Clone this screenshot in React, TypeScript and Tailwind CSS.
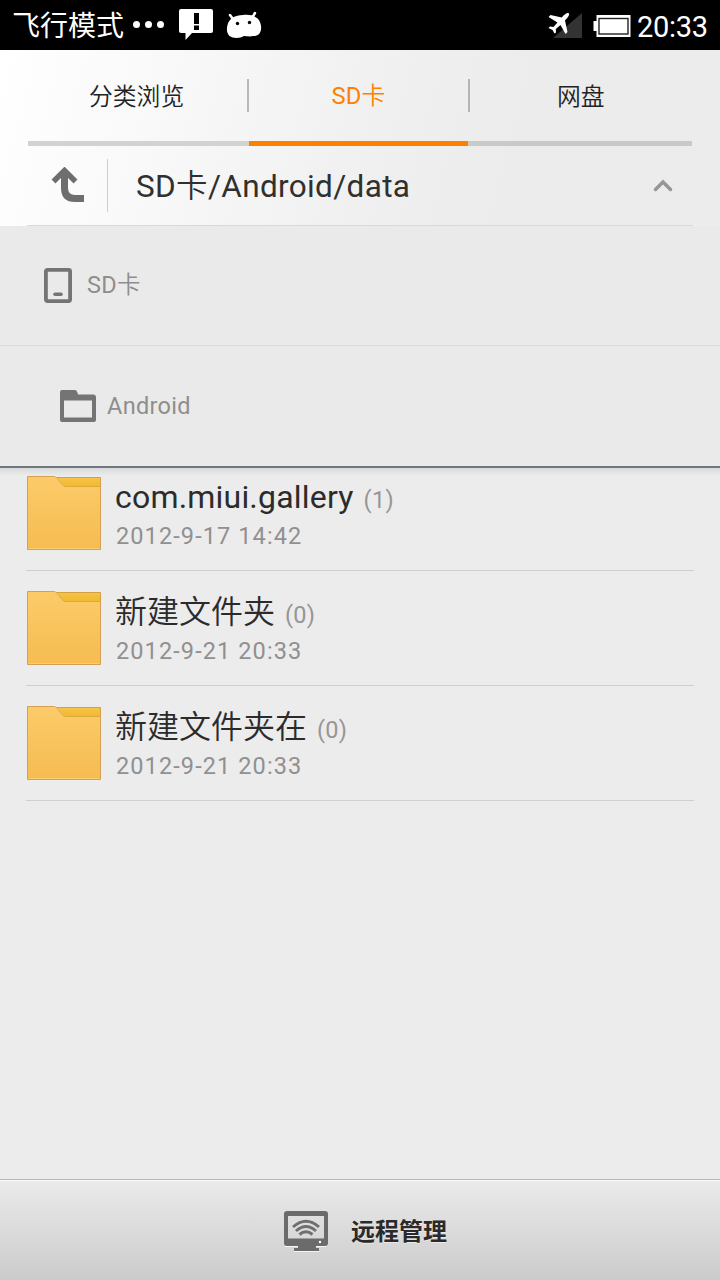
import React from 'react';

const FolderIcon = () => (
  <svg className="block h-[75px] w-[75px] shrink-0" viewBox="0 0 75 75">
    <defs>
      <linearGradient id="front" x1="0" y1="0" x2="0" y2="1">
        <stop offset="0" stopColor="#fccb69" />
        <stop offset="1" stopColor="#f5bc51" />
      </linearGradient>
      <linearGradient id="back" x1="0" y1="0" x2="0" y2="1">
        <stop offset="0" stopColor="#f7c44b" />
        <stop offset="0.7" stopColor="#f1ba31" />
        <stop offset="1" stopColor="#dca52f" />
      </linearGradient>
    </defs>
    <path d="M27 1.500H73.500V13H27Z" fill="url(#back)" stroke="#d3a044" />
    <path d="M.5.5H27.500C31 1.500 33 8 37.500 10.500H73.500V73.500H.5Z" fill="url(#front)" />
    <path d="M38 10.500H73" stroke="#e0a83c" fill="none" />
    <path d="M73.500 10V73.500H.5V.5H27.500" fill="none" stroke="#d3a056" />
    <path d="M27.500 .5C31 1.500 33 8 37.500 10.500" fill="none" stroke="#dfae55" />
    <path d="M1.500 72.500H72.500" stroke="#fbce72" />
  </svg>
);

type Entry = { name: string; count: string; date: string; nameClass: string };

const entries: Entry[] = [
  { name: 'com.miui.gallery', count: '(1)', date: '2012-9-17 14:42', nameClass: '-ml-px font-normal tracking-[0.2px]' },
  { name: '新建文件夹', count: '(0)', date: '2012-9-21 20:33', nameClass: '-ml-px font-[350]' },
  { name: '新建文件夹在', count: '(0)', date: '2012-9-21 20:33', nameClass: '-ml-px font-[350]' },
];

const StatusBar = () => (
  <div className="flex h-[50px] shrink-0 items-center bg-black text-white">
    <span className="ml-[12px] w-[121px] pt-[4px] text-[28px] leading-[46px] font-normal">飞行模式</span>
    <svg className="h-[50px] w-[32px]" viewBox="0 0 32 50" fill="#fff">
      <circle cx="3.500" cy="24.500" r="3.500" />
      <circle cx="15.500" cy="24.500" r="3.500" />
      <circle cx="27.500" cy="24.500" r="3.500" />
    </svg>
    <svg className="ml-[13px] h-[50px] w-[36px]" viewBox="0 0 36 50">
      <path d="M3 9H33Q35 9 35 11V31Q35 33 33 33H14L7.500 40V33H3Q1 33 1 31V11Q1 9 3 9Z" fill="#fff" />
      <path d="M16 13H21V24H16ZM16 25.500H21V30H16Z" fill="#000" />
    </svg>
    <svg className="ml-[12px] h-[50px] w-[36px]" viewBox="0 0 36 50">
      <path d="M4 15L8 20.500M29 13L26 18" stroke="#fff" strokeWidth="2.500" strokeLinecap="round" />
      <path d="M1.500 25C3 18.500 9 15 17 15C24 14 31 16 33.500 21C36 26 35.500 31.500 33 34C31 36 29 36 27 36C24 37 21 36 18 36C14 38.500 7 38.500 3.500 36C.5 33 .5 29 1.500 25Z" fill="#fff" />
      <circle cx="11.500" cy="23.500" r="1.700" />
      <circle cx="23.500" cy="22.500" r="1.700" />
    </svg>
    <svg className="ml-auto h-[50px] w-[36px]" viewBox="0 0 36 50">
      <path d="M35 13V38H6Z" fill="#333" />
      <path d="M21.800 13.300C20 12.500 17.500 14.500 14.800 17.500L3.500 15L1.500 17L10.500 22.500L6.500 27L3 26.500L1.500 28L5.500 30L7.500 33.500L9 32.500L8.800 29L13.500 25L18.500 34L20.500 32L18 20.500C21 17.500 23 14.500 21.800 13.300Z" fill="#fff" />
    </svg>
    <svg className="ml-[10px] h-[50px] w-[38px]" viewBox="0 0 38 50">
      <path d="M3.500 15H37.500V37H3.500V31H.5V21H3.500Z" fill="#fff" />
      <rect x="6" y="18.500" width="29" height="15.500" fill="#fff" stroke="#222" strokeWidth="1.400" />
    </svg>
    <span className="ml-[6px] w-[83px] pt-[4px] text-[29px] leading-[46px] tracking-[-0.3px]">20:33</span>
  </div>
);

const Tabs = () => (
  <div className="flex h-[96px] shrink-0 px-[28px] text-[23.800px] font-[350] text-[#222]">
    <div className="flex w-[221px] flex-col">
      <div className="flex h-[91px] items-center justify-between">
        <span className="ml-[61px] pt-[4px]">分类浏览</span>
        <span className="h-[33px] w-[2px] bg-[#b9b9b9]" />
      </div>
      <div className="h-[5px] bg-[#d2d2d2]" />
    </div>
    <div className="flex w-[219px] flex-col">
      <div className="flex h-[91px] items-center justify-center text-[#ff7f00]">
        <span className="pt-[3px] font-normal tracking-[0.2px]">SD<span className="font-[350]">卡</span></span>
      </div>
      <div className="h-[5px] bg-[#ff8000]" />
    </div>
    <div className="flex w-[224px] flex-col">
      <div className="flex h-[91px] items-center">
        <span className="h-[33px] w-[2px] bg-[#b5b5b5]" />
        <span className="ml-[87px] pt-[4px]">网盘</span>
      </div>
      <div className="h-[5px] bg-[#c9c9c9]" />
    </div>
  </div>
);

const PathBar = () => (
  <div className="mx-[27px] flex h-[80px] shrink-0 items-center border-b border-[#d9d9d9]">
    <svg className="ml-[24px] h-[38px] w-[34px]" viewBox="0 0 34 38" fill="none" stroke="#6e6e6e">
      <path d="M2.500 14.500L13.500 3.500L24.500 14.500" strokeWidth="5.500" />
      <path d="M13.500 5V21Q13.500 31.500 24 31.500H33" strokeWidth="7" />
    </svg>
    <span className="ml-[22px] h-[53px] w-px bg-[#cdcdcd]" />
    <span className="ml-[28px] pt-[2px] text-[31.500px] leading-[40px] tracking-[0.35px] text-[#303030]">SD<span className="font-[350]">卡</span>/Android/data</span>
    <svg className="mr-[19px] ml-auto h-[14px] w-[22px]" viewBox="0 0 22 14" fill="none" stroke="#969696" strokeWidth="3.500">
      <path d="M3.500 10.500L11 3L18.500 10.500" strokeLinecap="round" />
    </svg>
  </div>
);

const Breadcrumbs = () => (
  <div className="flex h-[242px] shrink-0 flex-col border-b-2 border-[#70777b] bg-[#eaeaea] text-[23.500px] font-normal text-[#8e8e8e]">
    <div className="flex h-[120px] items-center border-b border-[#dadada] pl-[44px]">
      <svg className="h-[35px] w-[28px]" viewBox="0 0 28 35" fill="none" stroke="#747474">
        <rect x="1.900" y="1.900" width="24.200" height="31.200" rx="1.500" strokeWidth="3.800" />
        <path d="M11 26.300H17" strokeWidth="3.500" strokeLinecap="round" />
      </svg>
      <span className="ml-[15px] tracking-[0.3px]">SD<span className="font-[350]">卡</span></span>
    </div>
    <div className="flex h-[120px] items-center pl-[60px]">
      <svg className="h-[32px] w-[36px]" viewBox="0 0 36 32">
        <path d="M2 0H15Q17 0 18 4.500H34Q36 5 36 7V30Q36 32 34 32H2Q0 32 0 30V2Q0 0 2 0ZM4 10.500V27.500H32V10.500Z" fill="#747474" fillRule="evenodd" />
      </svg>
      <span className="ml-[11px] pt-[2px] tracking-[0.3px]">Android</span>
    </div>
  </div>
);

const FileRow = ({ name, count, date, nameClass }: Entry) => (
  <div className="mx-[26px] flex h-[115px] shrink-0 items-center border-b border-[#d0d0d0] pl-px">
    <FolderIcon />
    <div className="ml-[14px] flex flex-col pt-[4px]">
      <div className="flex h-[40px] items-baseline">
        <span className={'text-[32px] leading-[38px] text-[#2b2b2b] ' + nameClass}>{name}</span>
        <span className="ml-[10px] text-[23.500px] font-normal tracking-[0.3px] text-[#969696]">{count}</span>
      </div>
      <span className="h-[34px] text-[23.500px] leading-[36px] font-normal tracking-[1.100px] text-[#909090]">{date}</span>
    </div>
  </div>
);

export default function App() {
  return (
    <div className="flex h-[1280px] w-[720px] flex-col overflow-hidden bg-[#ececec] font-['Roboto','Noto_Sans_CJK_SC',sans-serif] whitespace-nowrap">
      <StatusBar />
      <div className="flex shrink-0 flex-col bg-linear-[105deg,#ffffff_0%,#f8f8f8_25%,#f1f1f1_48%,#ececec_70%]">
        <Tabs />
        <PathBar />
      </div>
      <Breadcrumbs />
      <div className="flex h-[712px] flex-col bg-linear-[to_bottom,#d8dadb_0px,#ececec_8px]">
        <div className="-mt-[12px] flex flex-col">
          {entries.map((entry) => (
            <FileRow key={entry.name} {...entry} />
          ))}
        </div>
      </div>
      <div className="flex h-[101px] shrink-0 items-center border-t border-[#b8b8b8] bg-linear-to-b from-[#ebebeb] to-[#cbcbcb] pl-[283px] inset-shadow-[0_1px_0_#fafafa]">
        <svg className="mt-[2px] h-[42px] w-[45px]" viewBox="0 0 45 42" fill="none">
          <path d="M11 41.500H36M2 36.500H43" stroke="#f5f5f5" />
          <path d="M4 1H42Q45 1 45 4V33Q45 36 42 36H33V38H36V41H11V38H15V36H4Q1 36 1 33V4Q1 1 4 1ZM5 6V28.500H41V6Z" fill="#6b6b6b" fillRule="evenodd" />
          <circle cx="37" cy="32" r="1.200" fill="#fff" />
          <g stroke="#6f6f6f" strokeWidth="3">
            <path d="M10 17Q23 5.500 36 17" />
            <path d="M13 21Q23 12 33 21" />
            <path d="M16.500 24.500Q23 19 29.500 24.500" />
          </g>
        </svg>
        <span className="ml-[23px] pt-[3px] text-[24px] font-bold text-[#2a2a2a] [text-shadow:0_1px_0_#ffffff80]">远程管理</span>
      </div>
    </div>
  );
}
